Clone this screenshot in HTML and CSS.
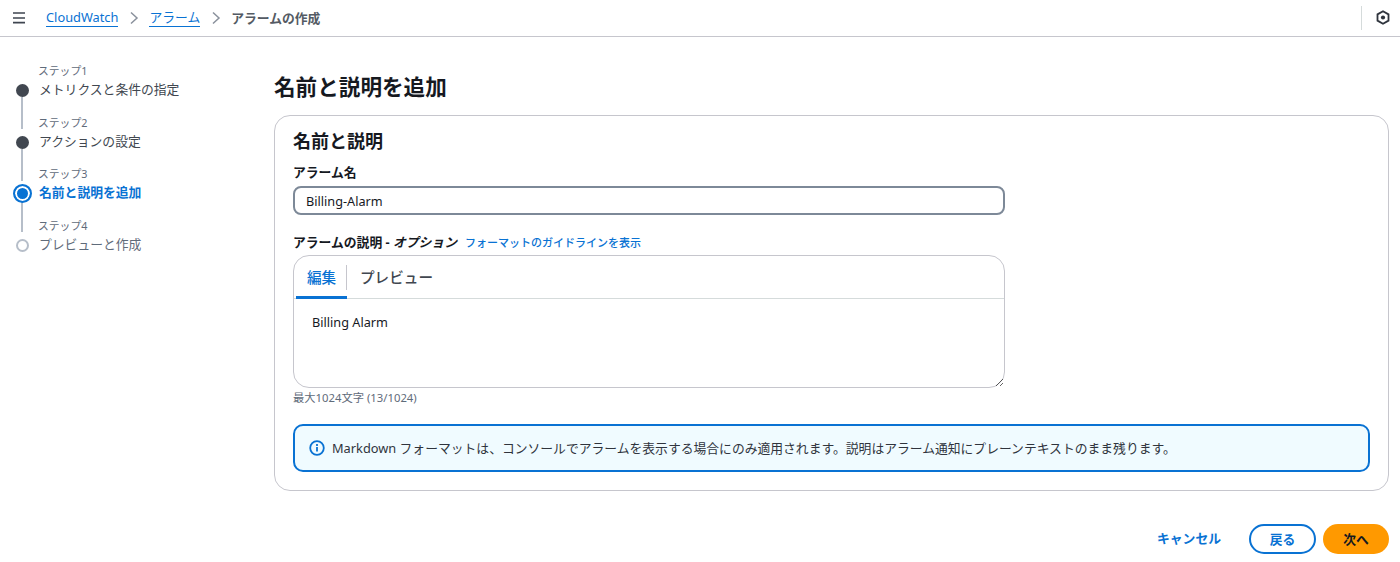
FILE: index.html
```html
<!DOCTYPE html>
<html lang="ja">
<head>
<meta charset="utf-8">
<title>アラームの作成</title>
<link rel="stylesheet" href="styles.css">
</head>
<body>
<header class="topbar">
  <svg class="menu" width="14" height="12" viewBox="0 0 14 12"><path d="M1 1h12M1 6h12M1 10.7h12" fill="none" stroke="#3f4550" stroke-width="1.700"/></svg>
  <nav class="crumbs">
    <a class="crumb">CloudWatch</a>
    <svg class="chev" width="10" height="14" viewBox="0 0 10 14"><path d="M2 1.5 8 7l-6 5.500" fill="none" stroke="#8a919c" stroke-width="1.500"/></svg>
    <a class="crumb">アラーム</a>
    <svg class="chev" width="10" height="14" viewBox="0 0 10 14"><path d="M2 1.5 8 7l-6 5.500" fill="none" stroke="#8a919c" stroke-width="1.500"/></svg>
    <span class="current">アラームの作成</span>
  </nav>
  <div class="tools">
    <span class="divider"></span>
    <svg width="14" height="15" viewBox="0 0 14 15"><path d="M7 1.300 12.500 4.400v6.200L7 13.700 1.500 10.600V4.400Z" fill="none" stroke="#2f343d" stroke-width="1.800"/><circle cx="7" cy="7.500" r="2.100" fill="#2f343d"/></svg>
  </div>
</header>
<div class="layout">
  <aside class="steps">
    <div class="step done">
      <div class="step-label">ステップ1</div>
      <div class="step-row"><span class="dot"></span><span class="step-title">メトリクスと条件の指定</span></div>
    </div>
    <div class="step done">
      <div class="step-label">ステップ2</div>
      <div class="step-row"><span class="dot"></span><span class="step-title">アクションの設定</span></div>
    </div>
    <div class="step active">
      <div class="step-label">ステップ3</div>
      <div class="step-row"><span class="dot"></span><span class="step-title">名前と説明を追加</span></div>
    </div>
    <div class="step todo">
      <div class="step-label">ステップ4</div>
      <div class="step-row"><span class="dot"></span><span class="step-title">プレビューと作成</span></div>
    </div>
  </aside>
  <main class="main">
    <h1 class="page-title">名前と説明を追加</h1>
    <section class="card">
      <h2 class="card-title">名前と説明</h2>
      <label class="label name-label">アラーム名</label>
      <input class="input" type="text" value="Billing-Alarm">
      <div class="desc-head">
        <span class="label">アラームの説明 - <em>オプション</em></span>
        <a class="guide">フォーマットのガイドラインを表示</a>
      </div>
      <div class="editor">
        <div class="tabs">
          <span class="tab tab-on">編集</span>
          <span class="tab tab-off">プレビュー</span>
        </div>
        <textarea class="area">Billing Alarm</textarea>
      </div>
      <div class="counter">最大1024文字 (13/1024)</div>
      <div class="alert">
        <svg width="16" height="16" viewBox="0 0 16 16"><circle cx="8" cy="8" r="6.800" fill="none" stroke="#0972d3" stroke-width="1.800"/><path d="M8 7v4.500" stroke="#0972d3" stroke-width="1.800"/><path d="M8 4v1.900" stroke="#0972d3" stroke-width="1.800"/></svg>
        <span>Markdown フォーマットは、コンソールでアラームを表示する場合にのみ適用されます。説明はアラーム通知にプレーンテキストのまま残ります。</span>
      </div>
    </section>
    <div class="actions">
      <a class="cancel">キャンセル</a>
      <button class="btn btn-back">戻る</button>
      <button class="btn btn-next">次へ</button>
    </div>
  </main>
</div>
</body>
</html>
```
FILE: styles.css
```css
* { box-sizing: border-box; }
html, body { margin: 0; height: 100%; }
body {
  font-family: "Noto Sans", "Noto Sans CJK JP", sans-serif;
  font-size: 12.8px;
  color: #16191f;
  background: #fff;
  overflow: hidden;
}
.topbar {
  height: 37px;
  border-bottom: 1px solid #c6c6cd;
  display: flex;
  align-items: center;
  padding: 0 10px 1px 12px;
}
.menu { margin-right: 20px; }
.crumbs { display: flex; align-items: center; font-size: 12.8px; }
.crumb { color: #0972d3; border-bottom: 1px solid #0972d3; line-height: 18px; }
.chev { margin: 0 10px 0 11px; }
.current { font-weight: 700; color: #545b64; }
.tools { margin-left: auto; display: flex; align-items: center; gap: 14px; }
.divider { width: 1px; height: 24px; background: #d5dbdb; }
.layout { display: flex; }
.steps { width: 274px; padding: 26px 0 0 13px; flex: none; }
.step { position: relative; height: 51.5px; padding-left: 26px; }
.step-label { font-size: 10.8px; line-height: 16px; color: #5f6b7a; margin-left: -1px; }
.step-row { line-height: 18px; margin-top: 1px; }
.step-title { font-size: 12.8px; color: #414750; }
.dot {
  position: absolute;
  left: 2.5px;
  top: 21px;
  width: 13px;
  height: 13px;
  border-radius: 50%;
  background: #414750;
}
.step:not(:last-child)::after {
  content: "";
  position: absolute;
  left: 8px;
  top: 34px;
  width: 2px;
  height: 32px;
  background: #b6bec9;
  z-index: -1;
}
.active .step-title { color: #0972d3; font-weight: 700; }
.active .dot {
  left: -0.500px;
  top: 18px;
  width: 19px;
  height: 19px;
  background: #0972d3;
  border: 2px solid #0972d3;
  box-shadow: inset 0 0 0 2px #fff;
}
.todo .dot { background: #fff; border: 2px solid #b6bec9; }
.todo .step-title { color: #5f6b7a; }
.main { width: 1115px; padding-top: 36px; }
.page-title { margin: 0 0 14px; font-size: 21.6px; line-height: 28px; font-weight: 700; color: #16191f; }
.card {
  height: 376px;
  border: 1px solid #c6c6cd;
  border-radius: 16px;
  padding: 13px 18px 0;
}
.card-title { margin: 0; font-size: 18px; line-height: 24px; font-weight: 700; }
.label { font-size: 12.8px; font-weight: 700; line-height: 18px; }
.label em { font-style: italic; }
.name-label { display: block; margin-top: 10px; }
.input {
  display: block;
  margin-top: 5px;
  width: 712px;
  height: 29px;
  border: 2px solid #7d8998;
  border-radius: 8px;
  padding: 0 11px;
  font: 12.7px "Noto Sans", "Noto Sans CJK JP", sans-serif;
  color: #16191f;
  background: #fff;
  outline: none;
}
.desc-head { display: flex; align-items: center; gap: 8px; margin-top: 18px; height: 18px; }
.guide { color: #0972d3; font-size: 11px; font-weight: 500; }
.editor {
  margin-top: 4px;
  width: 712px;
  height: 133px;
  border: 1px solid #c6c6cd;
  border-radius: 16px;
  display: flex;
  flex-direction: column;
}
.tabs { height: 43px; flex: none; display: flex; border-bottom: 1px solid #d5dbdb; padding-left: 2px; }
.tab { font-size: 14.6px; display: flex; align-items: center; height: 43px; }
.tab-on {
  width: 51px;
  justify-content: center;
  color: #0972d3;
  font-weight: 500;
  border-bottom: 3px solid #0972d3;
  position: relative;
}
.tab-on::after {
  content: "";
  position: absolute;
  right: 0;
  top: 9px;
  height: 25px;
  width: 1px;
  background: #c6c6cd;
}
.tab-off { color: #414750; padding: 0 0 2px 13px; font-weight: 500; }
.area {
  flex: 1;
  display: block;
  width: 100%;
  border: 0;
  outline: none;
  padding: 14px 18px;
  font: 12.7px/18px "Noto Sans", "Noto Sans CJK JP", sans-serif;
  color: #16191f;
  background: transparent;
  resize: vertical;
}
.counter { font-size: 11.3px; line-height: 14px; margin-top: 3px; color: #5f6b7a; }
.alert {
  margin-top: 19px;
  height: 48px;
  width: 1077px;
  border: 2px solid #0972d3;
  border-radius: 10px;
  background: #f0fbff;
  display: flex;
  align-items: center;
  gap: 7px;
  padding: 0 14px 1px;
  font-size: 12.8px;
  color: #2f343d;
}
.actions { display: flex; align-items: center; justify-content: flex-end; margin-top: 33px; height: 30px; }
.cancel { color: #0972d3; font-weight: 700; font-size: 12.8px; margin: 0 28px 3px 0; }
.btn {
  height: 30px;
  width: 67px;
  border-radius: 15px;
  font: 700 12.8px "Noto Sans", "Noto Sans CJK JP", sans-serif;
  padding: 0 0 2px;
}
.btn-back { background: #fff; border: 2px solid #0972d3; color: #0972d3; margin-right: 7px; }
.btn-next { background: #ff9900; border: 0; color: #16191f; width: 66px; }
```
